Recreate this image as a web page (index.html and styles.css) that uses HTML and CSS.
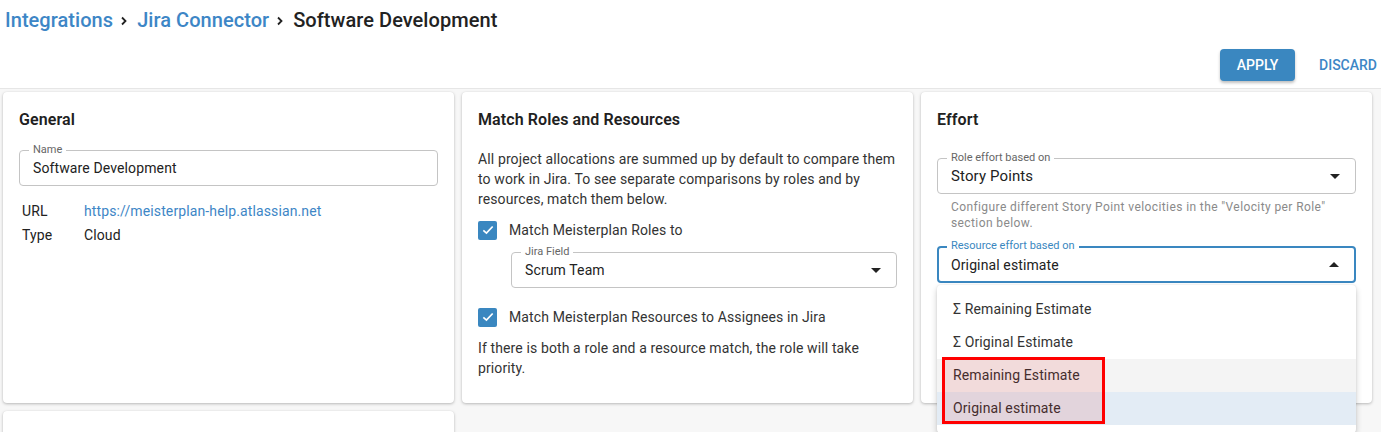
FILE: index.html
```html
<!DOCTYPE html>
<html>
<head>
<meta charset="utf-8">
<link rel="stylesheet" href="styles.css">
</head>
<body>
<header class="top">
  <nav class="crumbs">
    <a class="crumb-link">Integrations</a>
    <svg class="chev" viewBox="0 0 10 10" width="10" height="10"><path d="M3 1.5 L6.5 5 L3 8.5" fill="none" stroke="#222" stroke-width="1.8"/></svg>
    <a class="crumb-link">Jira Connector</a>
    <svg class="chev" viewBox="0 0 10 10" width="10" height="10"><path d="M3 1.5 L6.5 5 L3 8.5" fill="none" stroke="#222" stroke-width="1.8"/></svg>
    <span class="crumb-current">Software Development</span>
  </nav>
  <div class="actions">
    <button class="btn-primary">APPLY</button>
    <button class="btn-text">DISCARD</button>
  </div>
</header>
<main class="content">
  <section class="card">
    <h2 class="card-title">General</h2>
    <div class="field">
      <span class="field-label">Name</span>
      <span class="field-value">Software Development</span>
    </div>
    <table class="info">
      <tr><td class="info-key">URL</td><td><a class="link">https://meisterplan-help.atlassian.net</a></td></tr>
      <tr><td class="info-key">Type</td><td>Cloud</td></tr>
    </table>
  </section>
  <section class="card">
    <h2 class="card-title">Match Roles and Resources</h2>
    <p class="text">All project allocations are summed up by default to compare them to work in Jira. To see separate comparisons by roles and by resources, match them below.</p>
    <label class="check-row">
      <span class="checkbox"><svg viewBox="0 0 18 18" width="14" height="14"><path d="M3 9.5 L7 13 L15 4.5" fill="none" stroke="#fff" stroke-width="2.2"/></svg></span>
      <span>Match Meisterplan Roles to</span>
    </label>
    <div class="field select indent">
      <span class="field-label">Jira Field</span>
      <span class="field-value">Scrum Team</span>
      <span class="arrow down"></span>
    </div>
    <label class="check-row second">
      <span class="checkbox"><svg viewBox="0 0 18 18" width="14" height="14"><path d="M3 9.5 L7 13 L15 4.5" fill="none" stroke="#fff" stroke-width="2.2"/></svg></span>
      <span>Match Meisterplan Resources to Assignees in Jira</span>
    </label>
    <p class="text after">If there is both a role and a resource match, the role will take priority.</p>
  </section>
  <section class="card effort">
    <h2 class="card-title">Effort</h2>
    <div class="field select tall">
      <span class="field-label">Role effort based on</span>
      <span class="field-value big">Story Points</span>
      <span class="arrow down"></span>
    </div>
    <p class="helper">Configure different Story Point velocities in the "Velocity per Role" section below.</p>
    <div class="select-wrap">
      <div class="field select tall focused">
        <span class="field-label">Resource effort based on</span>
        <span class="field-value">Original estimate</span>
        <span class="arrow up"></span>
      </div>
      <ul class="menu">
        <li class="menu-item">Σ Remaining Estimate</li>
        <li class="menu-item">Σ Original Estimate</li>
        <li class="menu-item hover">Remaining Estimate</li>
        <li class="menu-item selected">Original estimate</li>
      </ul>
      <div class="highlight"></div>
    </div>
  </section>
  <section class="card"></section>
</main>
</body>
</html>
```
FILE: styles.css
```css
* { box-sizing: border-box; }
html, body { margin: 0; padding: 0; }
body {
  font-family: Roboto, "Noto Sans", sans-serif;
  color: #333;
  background: #f7f7f7;
  width: 1381px;
  height: 432px;
  overflow: hidden;
}
.top {
  background: #fff;
  height: 89px;
  border-bottom: 1px solid #e6e6e6;
  padding: 7px 0 0 5px;
}
.crumbs {
  display: flex;
  align-items: center;
  font-size: 20px;
  font-weight: 500;
  height: 26px;
  letter-spacing: 0.05px;
}
.crumb-link { color: #3d86c6; }
.crumb-current { color: #222; }
.chev { margin: 1px 8px 0 6px; }
.actions {
  display: flex;
  justify-content: flex-end;
  align-items: center;
  margin-top: 16px;
  gap: 16px;
  padding-right: 2px;
}
.btn-primary {
  font-family: Roboto, sans-serif;
  background: #3a87c0;
  color: #fff;
  border: none;
  border-radius: 4px;
  height: 32px;
  width: 75px;
  font-size: 14px;
  font-weight: 500;
  box-shadow: 0 2px 3px rgba(0,0,0,0.25);
}
.btn-text {
  font-family: Roboto, sans-serif;
  background: none;
  border: none;
  color: #3d86c6;
  font-size: 14px;
  font-weight: 500;
  padding: 0 2px 0 8px;
  height: 32px;
}
.content {
  display: grid;
  grid-template-columns: repeat(3, 451px);
  grid-template-rows: 311px 100px;
  gap: 8px;
  padding: 3px;
}
.card {
  background: #fff;
  border-radius: 4px;
  box-shadow: 0 1px 3px rgba(0,0,0,0.25), 0 0 1px rgba(0,0,0,0.08);
  padding: 16px;
  position: relative;
}
.card-title {
  margin: 0;
  font-size: 16px;
  font-weight: 600;
  line-height: 24px;
  color: #212121;
  letter-spacing: 0.1px;
}
.field {
  position: relative;
  height: 36px;
  border: 1px solid #c4c4c4;
  border-radius: 4px;
  margin-top: 18px;
  display: flex;
  align-items: center;
  padding: 0 13px;
}
.field-label {
  position: absolute;
  top: -7px;
  left: 9px;
  padding: 0 4px;
  background: #fff;
  font-size: 11px;
  line-height: 12px;
  color: #666;
}
.field-value { font-size: 14px; color: #222; letter-spacing: 0.12px; }
.field-value.big { font-size: 15px; }
.info {
  border-collapse: collapse;
  margin-top: 13px;
  font-size: 14px;
  color: #222;
  letter-spacing: 0.12px;
}
.info td { padding: 0 0 0 3px; height: 24px; }
.info-key { width: 62px; }
.link { color: #3d86c6; }
.text {
  margin: 17px 0 0;
  font-size: 14px;
  line-height: 20px;
  color: #333;
  letter-spacing: 0.12px;
}
.text.after { margin-top: 10px; }
.check-row {
  display: flex;
  align-items: center;
  gap: 12px;
  margin-top: 10px;
  font-size: 14px;
  color: #333;
  height: 22px;
  letter-spacing: 0.12px;
}
.check-row.second { margin-top: 18px; }
.checkbox {
  width: 19px;
  height: 19px;
  border-radius: 2px;
  background: #3a87c0;
  display: flex;
  align-items: center;
  justify-content: center;
}
.select .arrow {
  position: absolute;
  right: 15px;
  top: 50%;
  width: 0;
  height: 0;
  border-left: 5px solid transparent;
  border-right: 5px solid transparent;
}
.arrow.down { border-top: 5px solid #222; margin-top: -2px; }
.arrow.up { border-bottom: 5px solid #222; margin-top: -3px; }
.indent { margin: 11px 0 0 33px; }
.tall { margin-top: 26px; }
.helper {
  margin: 5px 0 0 14px;
  font-size: 12px;
  line-height: 16px;
  color: #8a8a8a;
  letter-spacing: 0.4px;
}
.select-wrap { position: relative; margin-top: 15px; }
.focused {
  margin-top: 0;
  border: 2px solid #3a87c0;
  height: 37px;
  padding: 0 12px;
}
.focused .field-label { color: #3a87c0; top: -8px; left: 8px; }
.menu {
  position: absolute;
  left: 0;
  right: 0;
  top: 39px;
  margin: 0;
  padding: 8px 0 8px;
  list-style: none;
  background: #fff;
  border-radius: 4px;
  box-shadow: 0 3px 6px rgba(0,0,0,0.2), 0 0 2px rgba(0,0,0,0.1);
  z-index: 2;
  max-height: 148px;
  overflow: hidden;
}
.menu-item {
  height: 33px;
  line-height: 33px;
  padding: 0 16px;
  font-size: 14px;
  color: #333;
  letter-spacing: 0.12px;
}
.menu-item.hover { background: #f4f4f4; }
.menu-item.selected { background: #e3ecf5; }
.highlight {
  position: absolute;
  left: 5px;
  top: 111px;
  width: 163px;
  height: 67px;
  border: 3px solid #ff0000;
  background: rgba(230, 0, 0, 0.1);
  z-index: 3;
}
```
